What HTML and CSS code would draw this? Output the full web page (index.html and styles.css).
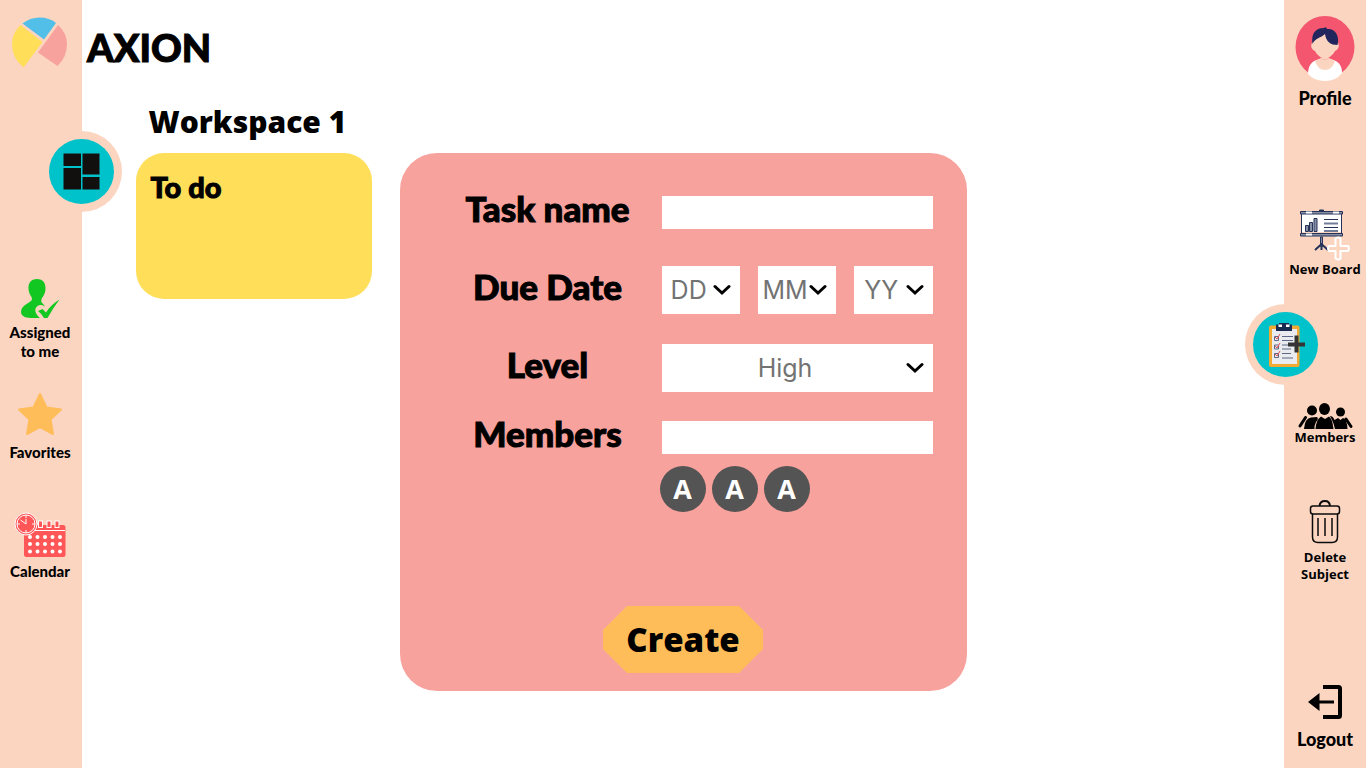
FILE: index.html
```html
<!DOCTYPE html>
<html lang="en">
<head>
<meta charset="utf-8">
<meta name="viewport" content="width=device-width, initial-scale=1">
<title>Axion</title>
<link rel="stylesheet" href="styles.css">
</head>
<body>
<div class="app">
  <nav class="sidebar sidebar-left" aria-label="Views">
    <a class="logo" href="#" aria-label="Axion home">
      <svg width="56" height="54" viewBox="0 0 56 54">
        <path fill="#52bfe8" d="M10.500 7.500Q18 1.500 27.500 1.500Q37.500 1.500 44 7L32 23.500Z"/>
        <path fill="#ffde59" d="M8.500 9L30.500 26L11.500 51.500Q0 42 0 28Q0 17 8.500 9Z"/>
        <path fill="#f8a29d" d="M46 9L26 36.500L45.500 50Q55 41 55 28Q55 17 46 9Z"/>
      </svg>
    </a>
    <a class="badge badge-left" href="#" aria-label="Dashboard">
      <span class="badge-disc">
        <svg width="37" height="37" viewBox="0 0 37 37" fill="#12100e">
          <path d="M.5.500h17.500v12.500H.5zM19.500.500H36.500V21.500H19.500zM.5 15h17.500V36.500H.5zM19.500 24H36.500v12.500H19.500z"/>
        </svg>
      </span>
    </a>
    <a class="item rounded item-assigned" href="#">
      <svg width="40" height="42" viewBox="0 0 40 42">
        <path fill="#12c722" d="M17 1C11 1 8 5 8.500 11C9 17 12 18 12 21C12 25 1 26 1 34C1 39 7 40 13 40H20C15 36 14 31 17 28.500C20 26 24 27 25 29C25 29 24 26 22 25C21 24 21 22 22 20C24 17 25.500 15 25.500 10C25.500 4 22 1 17 1Z"/>
        <path fill="#12c722" d="M18 33L22.500 31L26 34.500Q31 26.500 39.500 21.500Q33 30 27.500 40H24Q22 36 18 33Z"/>
      </svg>
      <span>Assigned<br>to me</span>
    </a>
    <a class="item rounded item-favorites" href="#">
      <svg width="46" height="44" viewBox="0 0 46 44">
        <path fill="#ffbd59" stroke="#ffbd59" stroke-width="2" stroke-linejoin="round" d="M23 2L29.500 15.500L44 17.500L33.500 27.500L36 42L23 35L10 42L12.500 27.500L2 17.500L16.500 15.500Z"/>
      </svg>
      <span>Favorites</span>
    </a>
    <a class="item rounded item-calendar" href="#">
      <svg width="52" height="46" viewBox="0 0 52 46">
        <rect x="10" y="13" width="41.500" height="32" rx="2.500" fill="#ff5757"/>
        <g fill="#ff5757" stroke="#fff" stroke-width="1"><rect x="24.500" y="9" width="4" height="6.500"/><rect x="33" y="9" width="4" height="6.500"/><rect x="41" y="9" width="4" height="6.500"/></g>
        <path stroke="#fff" stroke-width="1" d="M10 18.500h41"/>
        <path stroke="#fff" stroke-width="4" stroke-linecap="round" stroke-dasharray="0 7.500" d="M16 25h31M16 32h31M16 39.500h31"/>
        <circle cx="12" cy="12" r="11" fill="#ff5757" stroke="#fff" stroke-width="1"/>
        <circle cx="12" cy="12" r="9" fill="none" stroke="#fff" stroke-width="1"/>
        <path fill="none" stroke="#fff" stroke-width="1" d="M12 3v3M12 18v3M3 12h3M18 12h3M6.500 8L12 12V7"/>
      </svg>
      <span>Calendar</span>
    </a>
  </nav>

  <main class="main">
    <h1 class="brand rounded outlined">AXION</h1>
    <div class="board">
      <section class="workspace">
        <h2 class="workspace-title">Workspace 1</h2>
        <article class="card"><h3 class="card-title rounded outlined">To do</h3></article>
      </section>
      <form class="panel">
        <div class="fields">
          <label class="label rounded outlined" for="task">Task name</label>
          <input class="text" id="task" type="text">

          <label class="label rounded outlined row-date" for="day">Due Date</label>
          <div class="dates row-date">
            <select class="select" id="day" aria-label="Day"><option>DD</option></select>
            <select class="select" aria-label="Month"><option>MM</option></select>
            <select class="select" aria-label="Year"><option>YY</option></select>
          </div>

          <label class="label rounded outlined row-level" for="level">Level</label>
          <select class="select row-level" id="level"><option>High</option><option>Medium</option><option>Low</option></select>

          <label class="label rounded outlined row-members" for="members">Members</label>
          <input class="text row-members" id="members" type="text">

          <div class="chips">
            <span class="chip">A</span><span class="chip">A</span><span class="chip">A</span>
          </div>
        </div>
        <button class="create" type="button">Create</button>
      </form>
    </div>
  </main>

  <nav class="sidebar sidebar-right" aria-label="Actions">
    <a class="item rounded item-profile" href="#">
      <svg width="60" height="66" viewBox="0 0 60 66">
        <ellipse cx="30" cy="31" rx="29.500" ry="31" fill="#f3566e"/>
        <path fill="#fff" d="M13 58Q13 45 25 43H35Q47 45 47 57Q41 65 30 65Q19 65 13 58Z"/>
        <path fill="#fbd5c0" d="M20 45L26 42H34L40 45Q37 54 30 54Q23 54 20 45Z"/>
        <path fill="#fbd5c0" d="M17 27C15 30 17 34 20 35C22 39 27 43 30 43C33 43 38 39 40 35C43 34 45 30 43 27L40 18H21Z"/>
        <path fill="#f9b5aa" d="M25 42Q30 46 35 42Q30 44 25 42Z"/>
        <path fill="#23265c" d="M17.500 28C16 18 20 12 29 12C30 10.500 32 12 32 13C40 12 45 20 42.500 29C36 29 31 26 30 18C26 22 20 22 17.500 28Z"/>
      </svg>
      <span>Profile</span>
    </a>
    <a class="item item-board" href="#">
      <svg width="52" height="52" viewBox="0 0 52 52">
        <path fill="#fff" d="M3 5h40v18H3z"/>
        <g fill="#8790a5" stroke="#25335a" stroke-width="1"><path d="M1.500 2.500h42v2.500h-42zM1.500 24.500h42v2.500h-42z"/><path fill="#25335a" d="M20.500 1h4v1h-4z"/><path d="M6.500 16.500h3v6h-3zM10.500 13.500h3v9h-3zM15 9.500h3v13h-3zM21.500 28h2v9h-2z"/></g>
        <path fill="none" stroke="#25335a" stroke-width="1" d="M2.500 5v19M42.500 5v19M25 10.500h14M25 18.500h14"/>
        <path stroke="#727e99" stroke-width="2" d="M25 14.500h14M25 22h14"/>
        <path fill="none" stroke="#25335a" stroke-width="2" d="M22.500 34v7M21.500 36L16 41M23.500 36l5.500 5"/>
        <path stroke="#fff" stroke-width="2" d="M7 3.500h6M34 3.500h6M7 25.500h6"/>
        <path fill="#fbd5c0" stroke="#fff" stroke-width="2" stroke-linejoin="round" d="M36.500 29.500q3-2 5 0v7.500h7.500q2 2 0 5h-7.500v7.500q-2 2-5 0v-7.500H30q-2-3 0-5h6.500z"/>
      </svg>
      <span>New Board</span>
    </a>
    <a class="badge badge-right" href="#" aria-label="New task">
      <span class="badge-disc">
        <svg class="clipboard" width="38" height="46" viewBox="0 0 38 46">
          <rect x="1" y="3.500" width="30.500" height="41.500" rx="2" fill="#f3aa32"/>
          <path fill="#e9ebef" d="M4 7h25v35H4z"/>
          <path fill="#192b50" d="M8 2.500h3V1h10v1.500h3V9H8z"/>
          <path fill="#fff" d="M10.500 2.500h3.500v2.500h-3.500zM18 2.500h3.500v2.500H18z"/>
          <path fill="none" stroke="#5c6886" stroke-width="1" d="M6.500 14.500h4v4h-4zM6.500 23h4v4h-4zM6.500 31.500h4v4h-4zM14 14.500h11M14 18.500h11M14 23h11M14 27h9M14 31.500h9M14 36h11"/>
          <path fill="none" stroke="#e34b57" stroke-width="1" d="M7 15l2 2 3-5M7 24l2 2 3-5M7 32l2 2 3-5"/>
          <path stroke="#343434" stroke-width="4" d="M28.500 13.500v17M20 22.500h17"/>
        </svg>
      </span>
    </a>
    <a class="item item-members" href="#">
      <svg width="56" height="26" viewBox="0 1 56 26">
        <circle cx="15" cy="8.500" r="5"/><ellipse cx="27.500" cy="7" rx="5.500" ry="6"/><circle cx="43.500" cy="10" r="4.500"/>
        <path d="M7 27Q8 16 14 15.500L20 15Q22 17 19 20Q17 24 17.500 27ZM18.500 27Q19 18 24 14.500L28 17L32 14.500Q35.500 17 36.500 27ZM38 27Q37 22 35 18Q34 16 33 14Q36 14 37.500 18L41 16L43.500 18L46 16Q50 17 50.500 27Z"/>
        <path fill="none" stroke="#000" stroke-width="3" stroke-linecap="round" d="M8.500 15.500L3 24M49 17l5 7.500"/>
      </svg>
      <span>Members</span>
    </a>
    <a class="item item-delete" href="#">
      <svg width="32" height="44" viewBox="0 0 32 44" fill="none" stroke="#0b0b0b" stroke-width="2">
        <path d="M10.500 6Q11 1 16 1Q20.500 1 21 6"/>
        <rect x="1.500" y="6" width="29" height="8" rx="2.500" stroke-width="1.500"/>
        <path stroke-width="1.500" d="M3.500 14V37Q3.500 42.500 9 42.500H23Q28.500 42.500 28.500 37V14M9 18V36M16 18V36M23 18V36"/>
      </svg>
      <span>Delete<br>Subject</span>
    </a>
    <a class="item rounded item-logout" href="#">
      <svg width="36" height="34" viewBox="0 0 36 34">
        <path fill="none" stroke="#000" stroke-width="4" d="M16 2h15.500q1.500 0 1.500 1.500v27q0 1.500-1.500 1.500H16"/>
        <path d="M1 17L12.500 8V15.500H27V18.500H12.500V26Z"/>
      </svg>
      <span>Logout</span>
    </a>
  </nav>
</div>
</body>
</html>
```
FILE: styles.css
```css
* {
  box-sizing: border-box;
}

body {
  margin: 0;
  background: #fff;
  color: #000;
  font-family: Lato, "Open Sans", sans-serif;
}

h1,
h2,
h3 {
  margin: 0;
}

svg {
  display: block;
}

.app {
  display: grid;
  grid-template-columns: 82px 1fr 82px;
  min-height: 100vh;
}

/* Heavy display lettering */
.rounded {
  font-weight: 900;
}

.outlined {
  -webkit-text-stroke: 1px #000;
}

/* Side bars */
.sidebar {
  display: flex;
  flex-direction: column;
  align-items: center;
  padding: 16px 0 19px;
  background: #fbd5c0;
}

.sidebar-left {
  padding-right: 2px;
}

.item {
  display: flex;
  flex-direction: column;
  align-items: center;
  color: #000;
  font-size: 15px;
  line-height: 19px;
  text-align: center;
  text-decoration: none;
}

.badge {
  display: grid;
  place-items: center;
  width: 81px;
  height: 81px;
  border-radius: 50%;
  background: #fbd5c0;
}

.badge-left {
  align-self: flex-end;
  margin: 61px -42px 0 0;
}

.badge-right {
  align-self: flex-start;
  margin: 26px 0 0 -39px;
}

.badge-disc {
  display: grid;
  place-items: center;
  width: 65px;
  height: 65px;
  border-radius: 50%;
  background: #00c2cb;
}

.clipboard {
  margin-left: 2px;
}

.item-assigned {
  gap: 3px;
  margin-top: 66px;
}

.item-favorites {
  gap: 7px;
  margin-top: 31px;
}

.item-calendar {
  gap: 4px;
  margin-top: 50px;
}

.item-profile,
.item-logout {
  font-size: 18px;
  line-height: 20px;
}

.item-profile {
  gap: 6px;
}

.item-board,
.item-members,
.item-delete {
  font-family: "Open Sans", sans-serif;
  font-size: 13px;
  font-weight: 700;
  line-height: 17px;
}

.item-board {
  margin-top: 101px;
}

.item-members {
  margin-top: 18px;
}

.item-delete {
  gap: 5px;
  margin-top: 54px;
}

.item-logout {
  gap: 10px;
  margin-top: auto;
}

/* Board */
.brand {
  padding: 23px 0 0 5px;
  font-size: 38px;
  line-height: 48px;
}

.board {
  display: grid;
  grid-template-columns: 1fr minmax(0, 567px) 1fr;
  column-gap: 28px;
  align-items: start;
  padding-top: 29px;
}

.workspace {
  justify-self: end;
  width: 236px;
}

.workspace-title {
  padding-left: 13px;
  font-family: "Open Sans", sans-serif;
  font-size: 30px;
  font-weight: 800;
  line-height: 44px;
  white-space: nowrap;
}

.card {
  min-height: 146px;
  margin-top: 9px;
  padding: 18px 15px;
  border-radius: 28px;
  background: #ffde59;
}

.card-title {
  font-size: 29px;
  line-height: 32px;
}

/* Task form */
.panel {
  display: flex;
  flex-direction: column;
  gap: 94px;
  margin: 53px 0 32px;
  padding: 43px 34px 18px;
  border-radius: 37px;
  background: #f8a29d;
}

.fields {
  display: grid;
  grid-template-columns: 1fr 271px;
}

.label {
  align-self: center;
  height: 33px;
  font-size: 35px;
  line-height: 25px;
  text-align: center;
}

.row-date {
  margin-top: 37px;
}

.row-level {
  margin-top: 30px;
}

.row-members {
  margin-top: 29px;
}

.text {
  width: 100%;
  height: 33px;
  padding: 0 10px;
  border: 0;
  border-radius: 0;
  background: #fff;
  font: 20px Inter, sans-serif;
}

.dates {
  display: grid;
  grid-template-columns: repeat(3, 1fr);
  gap: 18px;
}

.select {
  appearance: none;
  width: 100%;
  height: 48px;
  padding: 0 24px 0 0;
  border: 0;
  border-radius: 0;
  background: #fff url("data:image/svg+xml,%3Csvg xmlns='http://www.w3.org/2000/svg' width='18' height='12'%3E%3Cpath d='M2 2.500L9 9L16 2.500' fill='none' stroke='black' stroke-width='3' stroke-linecap='round'/%3E%3C/svg%3E") no-repeat right 9px center;
  color: #737373;
  font: 400 25px Inter, sans-serif;
  text-align: center;
  text-align-last: center;
}

.chips {
  display: flex;
  grid-column: 2;
  gap: 6px;
  margin: 12px 0 0 -2px;
}

.chip {
  width: 46px;
  border-radius: 50%;
  background: #545454;
  color: #fff;
  font: 700 27px/46px "Open Sans", sans-serif;
  text-align: center;
}

.create {
  align-self: center;
  width: 160px;
  height: 67px;
  padding: 0;
  border: 0;
  background: #ffbd59;
  clip-path: polygon(24px 0, calc(100% - 24px) 0, 100% 24px, 100% calc(100% - 24px), calc(100% - 24px) 100%, 24px 100%, 0 calc(100% - 24px), 0 24px);
  color: #000;
  font: 800 33px/67px "Open Sans", sans-serif;
}
```
